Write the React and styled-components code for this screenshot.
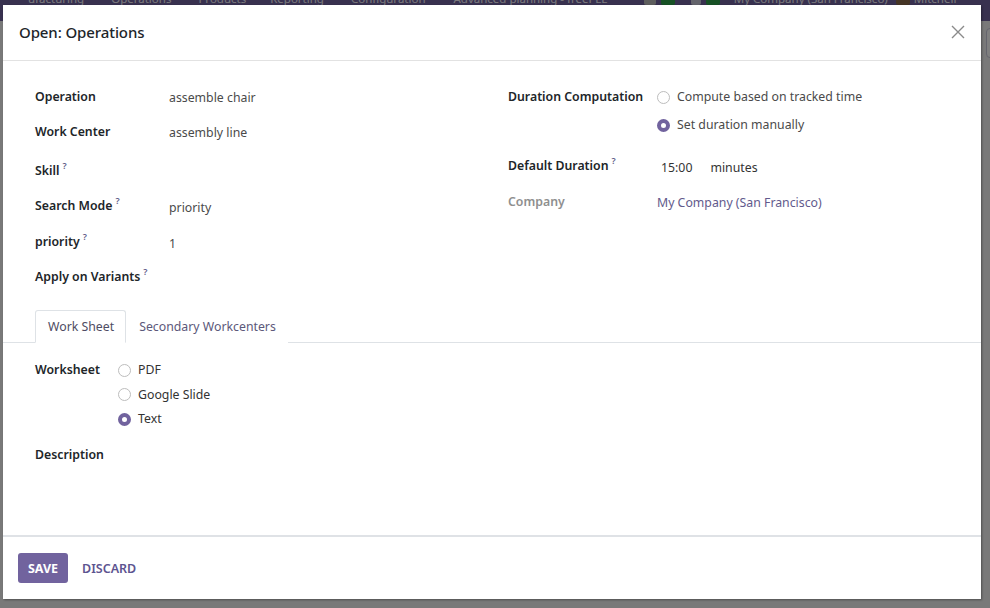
import React from "react";
import styled, { createGlobalStyle } from "styled-components";

const Global = createGlobalStyle`
  html, body { margin: 0; padding: 0; }
  body {
    width: 990px; height: 608px; overflow: hidden;
    font-family: "Noto Sans", "Open Sans", sans-serif;
    font-size: 12.3px; color: #212529;
    background: #f0f0f0;
  }
  * { box-sizing: border-box; }
`;

const Screen = styled.div`
  position: relative;
  width: 990px;
  height: 608px;
  overflow: hidden;
  background: #f2f2f2;
`;

const Navbar = styled.div`
  display: flex;
  align-items: center;
  height: 46px;
  margin-top: -25px;
  background: #71639e;
  color: #f4f2fa;
  font-size: 11.5px;
  white-space: nowrap;
`;

const NavItem = styled.span`
  margin-left: ${(p) => p.$ml}px;
`;

const NavSquare = styled.span`
  display: inline-block;
  width: ${(p) => p.$w || 14}px;
  height: 14px;
  margin-left: ${(p) => p.$ml}px;
  background: ${(p) => p.$c};
  border-radius: 2px;
`;

const ControlButton = styled.div`
  position: absolute;
  left: 986px;
  top: 28px;
  width: 30px;
  height: 30px;
  border: 1px solid #c8c8d8;
  border-radius: 4px;
  background: #fff;
`;

const Backdrop = styled.div`
  position: absolute;
  inset: 0;
  background: rgba(0, 0, 0, 0.5);
`;

const Modal = styled.div`
  position: absolute;
  left: 3px;
  top: 5px;
  width: 978px;
  height: 594px;
  background: #fff;
  display: flex;
  flex-direction: column;
  box-shadow: 1px 1px 2px rgba(0, 0, 0, 0.35);
`;

const Header = styled.div`
  display: flex;
  align-items: center;
  justify-content: space-between;
  height: 56px;
  padding: 0 15px 0 16px;
  border-bottom: 1px solid #e2e2e2;
  flex: none;
`;

const Title = styled.h4`
  margin: -1px 0 0;
  font-size: 15px;
  font-weight: 500;
  color: #212529;
  letter-spacing: -0.1px;
`;

const CloseButton = styled.button`
  border: 0;
  background: none;
  padding: 0;
  width: 16px;
  height: 16px;
  display: flex;
  margin-top: -2px;
`;

const Body = styled.div`
  flex: 1;
  display: flex;
  flex-direction: column;
  padding-top: 26px;
`;

const OuterGroup = styled.div`
  display: grid;
  grid-template-columns: 473px 1fr;
  padding: 0 32px;
`;

const InnerGroup = styled.div`
  display: flex;
  flex-direction: column;
`;

const FieldRow = styled.div`
  display: grid;
  grid-template-columns: ${(p) => p.$labelWidth}px 1fr;
  height: ${(p) => p.$h}px;
  align-items: start;
`;

const Label = styled.label`
  line-height: 20px;
  font-weight: 600;
  color: ${(p) => (p.$muted ? "#8f8f8f" : "#212529")};
  white-space: nowrap;
`;

const Help = styled.sup`
  font-size: 9px;
  font-weight: 600;
  color: #5d5a87;
  margin-left: 3px;
  vertical-align: 6px;
  line-height: 0;
`;

const Value = styled.div`
  line-height: 20px;
  padding-top: ${(p) => p.$dy || 1}px;
  color: ${(p) => p.$color || "#4a4a4a"};
  white-space: nowrap;
`;

const RadioList = styled.div`
  display: flex;
  flex-direction: column;
  gap: ${(p) => p.$gap}px;
`;

const RadioItem = styled.label`
  display: flex;
  align-items: center;
  gap: 7px;
  line-height: 20px;
  color: ${(p) => p.$color || "#4a4a4a"};
  white-space: nowrap;
`;

const RadioDot = styled.span`
  width: 13px;
  height: 13px;
  border-radius: 50%;
  flex: none;
  background: #fff;
  border: ${(p) => (p.$checked ? "4px solid #71639e" : "1px solid #bdbdbd")};
`;

const DurationValue = styled.div`
  display: flex;
  gap: 18px;
  line-height: 20px;
  padding-top: 2px;
  padding-left: 4px;
  color: #333;
`;

const TabNav = styled.div`
  display: flex;
  margin-top: 9px;
  padding-left: 32px;
  border-bottom: 1px solid #dee2e6;
  height: 33px;
`;

const Tab = styled.div`
  height: 33px;
  padding: 0 11px 0 12px;
  display: flex;
  align-items: center;
  color: ${(p) => (p.$active ? "#4e4c63" : "#5c587a")};
  background: #fff;
  border: 1px solid ${(p) => (p.$active ? "#dee2e6" : "transparent")};
  border-bottom-color: ${(p) => (p.$active ? "#fff" : "transparent")};
  border-radius: 3px 3px 0 0;
  white-space: nowrap;
`;

const TabContent = styled.div`
  padding: 17px 32px 0;
  display: flex;
  flex-direction: column;
  gap: 16px;
`;

const Footer = styled.div`
  flex: none;
  height: 64px;
  border-top: 2px solid #dfe2e6;
  display: flex;
  align-items: center;
  gap: 4px;
  padding: 0 15px 0;
`;

const PrimaryButton = styled.button`
  height: 30px;
  width: 50px;
  border: 0;
  border-radius: 3px;
  background: #71639e;
  color: #fff;
  font-family: inherit;
  font-size: 12.5px;
  font-weight: 700;
  text-transform: uppercase;
  padding: 0;
`;

const LinkButton = styled.button`
  height: 30px;
  border: 0;
  background: none;
  color: #5d5490;
  font-family: inherit;
  font-size: 12.5px;
  font-weight: 600;
  text-transform: uppercase;
  padding: 0 10px;
`;

const leftFields = [
  { label: "Operation", value: "assemble chair", h: 35 },
  { label: "Work Center", value: "assembly line", h: 39 },
  { label: "Skill", help: true, value: "", h: 35 },
  { label: "Search Mode", help: true, value: "priority", h: 36, dy: 2 },
  { label: "priority", help: true, value: "1", h: 35, dy: 2 },
  { label: "Apply on Variants", help: true, value: "", h: 34 },
];

export default function App() {
  return (
    <Screen>
      <Global />
      <Navbar>
        <NavItem $ml={28}>ufacturing</NavItem>
        <NavItem $ml={27}>Operations</NavItem>
        <NavItem $ml={27}>Products</NavItem>
        <NavItem $ml={24}>Reporting</NavItem>
        <NavItem $ml={27}>Configuration</NavItem>
        <NavItem $ml={28}>Advanced planning - freePLE</NavItem>
        <NavSquare $ml={36} $c="#bdbdbd" $w={12} />
        <NavSquare $ml={5} $c="#2ea24a" />
        <NavSquare $ml={16} $c="#c9c9d9" $w={10} />
        <NavSquare $ml={5} $c="#2ea24a" />
        <NavItem $ml={14}>My Company (San Francisco)</NavItem>
        <NavSquare $ml={8} $c="#8a6a4a" />
        <NavItem $ml={4}>Mitchell</NavItem>
      </Navbar>
      <ControlButton />
      <Backdrop />
      <Modal>
        <Header>
          <Title>Open: Operations</Title>
          <CloseButton aria-label="Close">
            <svg width="16" height="16" viewBox="0 0 16 16">
              <path d="M2 2 L14 14 M14 2 L2 14" stroke="#8a8a8a" strokeWidth="1.4" fill="none" />
            </svg>
          </CloseButton>
        </Header>
        <Body>
          <OuterGroup>
            <InnerGroup>
              {leftFields.map((f) => (
                <FieldRow key={f.label} $labelWidth={134} $h={f.h}>
                  <Label>
                    {f.label}
                    {f.help && <Help>?</Help>}
                  </Label>
                  <Value $dy={f.dy}>{f.value}</Value>
                </FieldRow>
              ))}
            </InnerGroup>
            <InnerGroup>
              <FieldRow $labelWidth={149} $h={69}>
                <Label>Duration Computation</Label>
                <RadioList $gap={8}>
                  <RadioItem>
                    <RadioDot />
                    Compute based on tracked time
                  </RadioItem>
                  <RadioItem>
                    <RadioDot $checked />
                    Set duration manually
                  </RadioItem>
                </RadioList>
              </FieldRow>
              <FieldRow $labelWidth={149} $h={36}>
                <Label>
                  Default Duration<Help>?</Help>
                </Label>
                <DurationValue>
                  <span>15:00</span>
                  <span>minutes</span>
                </DurationValue>
              </FieldRow>
              <FieldRow $labelWidth={149} $h={34}>
                <Label $muted>Company</Label>
                <Value $dy={0} $color="#625a8c">My Company (San Francisco)</Value>
              </FieldRow>
            </InnerGroup>
          </OuterGroup>
          <TabNav>
            <Tab $active>Work Sheet</Tab>
            <Tab>Secondary Workcenters</Tab>
          </TabNav>
          <TabContent>
            <FieldRow $labelWidth={83} $h={69}>
              <Label>Worksheet</Label>
              <RadioList $gap={4.5}>
                <RadioItem $color="#333">
                  <RadioDot />
                  PDF
                </RadioItem>
                <RadioItem $color="#333">
                  <RadioDot />
                  Google Slide
                </RadioItem>
                <RadioItem $color="#333">
                  <RadioDot $checked />
                  Text
                </RadioItem>
              </RadioList>
            </FieldRow>
            <FieldRow $labelWidth={83} $h={20}>
              <Label>Description</Label>
              <Value />
            </FieldRow>
          </TabContent>
        </Body>
        <Footer>
          <PrimaryButton>Save</PrimaryButton>
          <LinkButton>Discard</LinkButton>
        </Footer>
      </Modal>
    </Screen>
  );
}
